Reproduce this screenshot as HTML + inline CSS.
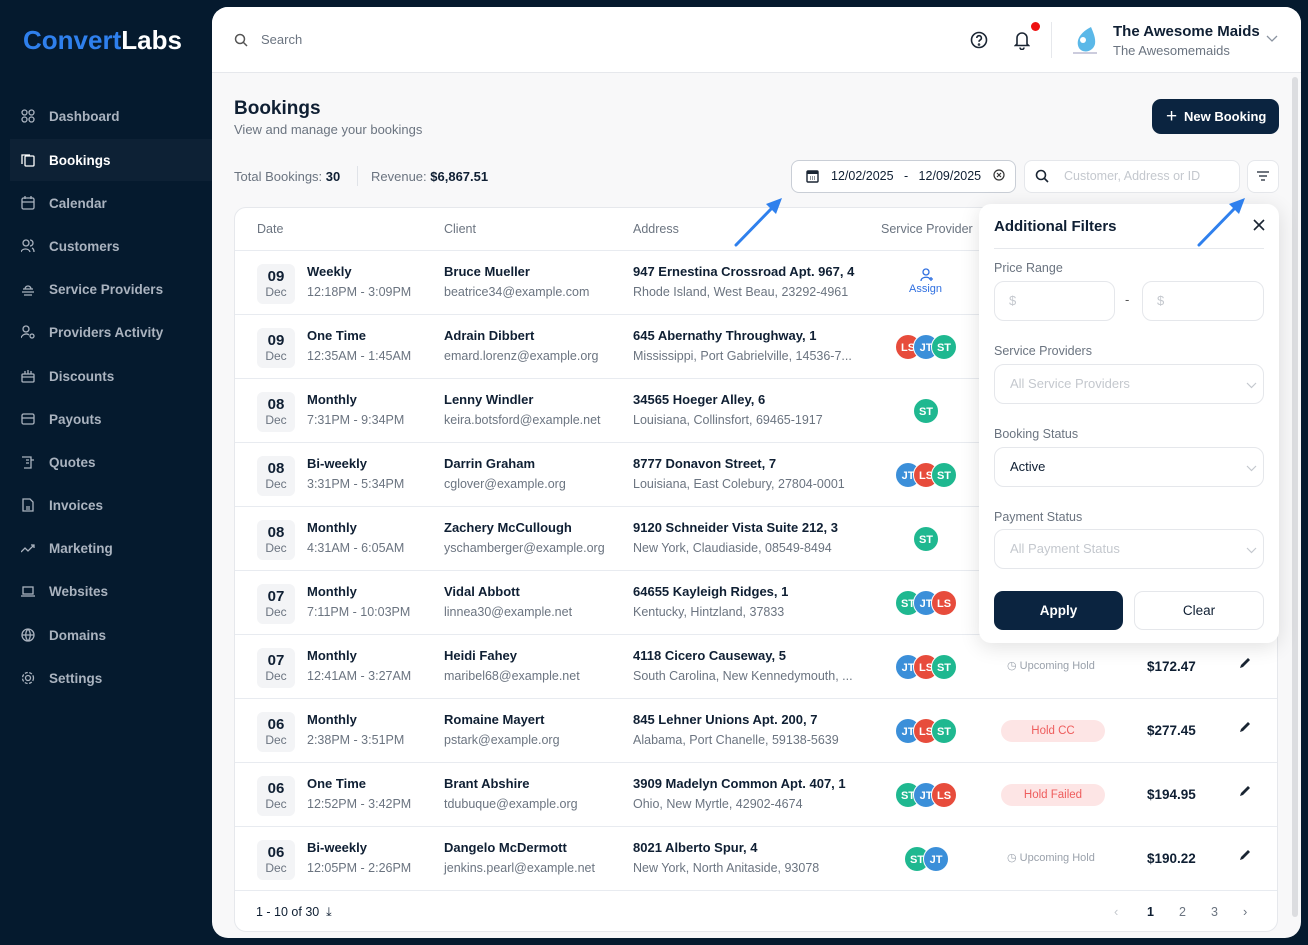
<!DOCTYPE html>
<html><head><meta charset="utf-8"><style>
*{box-sizing:border-box;margin:0;padding:0}
body{width:1308px;height:945px;background:#051a2e;font-family:"Liberation Sans",sans-serif;position:relative;overflow:hidden;color:#0f1f33}
.a{position:absolute}
.logo{left:23px;top:25px;font-size:26px;font-weight:bold;color:#fff}
.logo span{color:#2f80ed}
.nav{left:0;width:212px}
.ni{position:absolute;left:0;width:212px;height:42px;display:flex;align-items:center;padding-left:49px;color:#aab3bf;font-size:13.5px;font-weight:bold}
.ni.on{background:#0d2135;color:#fff;left:10px;width:202px;padding-left:39px}
.ni svg{position:absolute;left:21px;top:14px}
.ni.on svg{left:11px}
.main{left:212px;top:7px;width:1089px;height:931px;background:#f8f8f9;border-radius:16px;overflow:hidden}
.hdr{position:absolute;left:0;top:0;width:100%;height:66px;background:#fff;border-bottom:1px solid #e6e8ec}
.card{left:22px;top:200px;width:1044px;height:725px;background:#fff;border:1px solid #e6e8ec;border-radius:12px;overflow:hidden}
.row{position:absolute;left:0;width:100%;height:64px;border-top:1px solid #e8ebf0}
.db{position:absolute;left:22px;top:13px;width:38px;height:40px;background:#f3f4f6;border-radius:6px;text-align:center}
.db b{display:block;font-size:15px;margin-top:4px}
.db i{display:block;font-style:normal;font-size:12px;color:#6b7480}
.t1{position:absolute;font-size:13px;font-weight:bold;color:#0f1f33;top:13px;white-space:nowrap}
.t2{position:absolute;font-size:12.5px;color:#6b7480;top:34px;white-space:nowrap}
.av{position:absolute;width:26px;height:26px;border-radius:50%;color:#fff;font-size:11px;font-weight:bold;text-align:center;line-height:26px;top:19px;border:1px solid #fff}
.r{background:#e74c3c}.b{background:#3b8fd9}.g{background:#1fb890}
.pill{position:absolute;left:766px;top:21px;width:104px;height:22px;border-radius:11px;background:#fde5e5;color:#ee5d5d;font-size:11.5px;text-align:center;line-height:22px}
.up{position:absolute;left:772px;top:24px;font-size:11px;color:#9aa1ab}
.price{position:absolute;left:912px;top:24px;font-size:13.5px;font-weight:bold}
.pen{position:absolute;left:1004px;top:22px}
.flt{left:979px;top:204px;width:300px;height:439px;background:#fff;border-radius:12px;box-shadow:0 4px 20px rgba(0,0,0,.12)}
.lbl{position:absolute;left:15px;font-size:12.5px;color:#6b7480}
.inp{position:absolute;border:1px solid #e5e7eb;border-radius:10px;height:40px;font-size:13px;color:#c4c8ce;padding:11px 14px}
</style></head><body>
<div class="a logo"><span>Convert</span>Labs</div>

<div class="a nav" style="top:95px">
<div class="ni" style="top:0"><svg width="14" height="14" fill="none" stroke="#aab3bf" stroke-width="1.3"><rect x="1" y="1" width="5" height="5" rx="2.5"/><rect x="8" y="1" width="5" height="5" rx="2.5"/><rect x="1" y="8" width="5" height="5" rx="2.5"/><rect x="8" y="8" width="5" height="5" rx="2.5"/></svg>Dashboard</div>
<div class="ni on" style="top:44px"><svg width="14" height="14" fill="none" stroke="#fff" stroke-width="1.3"><rect x="4" y="3" width="9" height="10" rx="1"/><path d="M1 11V2h8"/></svg>Bookings</div>
<div class="ni" style="top:87px"><svg width="14" height="14" fill="none" stroke="#aab3bf" stroke-width="1.3"><rect x="1" y="2" width="12" height="11" rx="1.5"/><path d="M1 6h12M4 0v3M10 0v3"/></svg>Calendar</div>
<div class="ni" style="top:130px"><svg width="14" height="14" fill="none" stroke="#aab3bf" stroke-width="1.3"><circle cx="5" cy="4" r="3"/><path d="M0 13c1-4 8-4 9 0M9 1a3 3 0 010 6M11 9c2 1 2 3 2 4"/></svg>Customers</div>
<div class="ni" style="top:173px"><svg width="14" height="14" fill="none" stroke="#aab3bf" stroke-width="1.3"><path d="M2 7h10M4 7a3 3 0 016 0M1 10h12M3 13h8"/></svg>Service Providers</div>
<div class="ni" style="top:216px"><svg width="14" height="14" fill="none" stroke="#aab3bf" stroke-width="1.3"><circle cx="5" cy="4" r="3"/><path d="M0 13c1-4 6-5 8-3"/><circle cx="11" cy="11" r="2"/></svg>Providers Activity</div>
<div class="ni" style="top:260px"><svg width="14" height="14" fill="none" stroke="#aab3bf" stroke-width="1.3"><rect x="1" y="5" width="12" height="8" rx="1"/><path d="M1 8h12M4 5V2M7 5V1M10 5V2"/></svg>Discounts</div>
<div class="ni" style="top:303px"><svg width="14" height="14" fill="none" stroke="#aab3bf" stroke-width="1.3"><rect x="1" y="2" width="12" height="10" rx="1.5"/><path d="M1 6h12"/></svg>Payouts</div>
<div class="ni" style="top:346px"><svg width="14" height="14" fill="none" stroke="#aab3bf" stroke-width="1.3"><path d="M1 2h9v11H3M10 5h3M5 5h3M5 8h3"/></svg>Quotes</div>
<div class="ni" style="top:389px"><svg width="14" height="14" fill="none" stroke="#aab3bf" stroke-width="1.3"><path d="M2 1h7l3 3v9H2zM5 9h4M5 11h4"/></svg>Invoices</div>
<div class="ni" style="top:432px"><svg width="14" height="14" fill="none" stroke="#aab3bf" stroke-width="1.3"><path d="M0 11l4-4 3 3 6-6M10 4h3v3"/></svg>Marketing</div>
<div class="ni" style="top:475px"><svg width="14" height="14" fill="none" stroke="#aab3bf" stroke-width="1.3"><rect x="2" y="3" width="10" height="7"/><path d="M0 12h14"/></svg>Websites</div>
<div class="ni" style="top:519px"><svg width="14" height="14" fill="none" stroke="#aab3bf" stroke-width="1.3"><circle cx="7" cy="7" r="6"/><path d="M1 7h12M7 1c-3 3-3 9 0 12M7 1c3 3 3 9 0 12"/></svg>Domains</div>
<div class="ni" style="top:562px"><svg width="14" height="14" fill="none" stroke="#aab3bf" stroke-width="1.3"><circle cx="7" cy="7" r="2.5"/><circle cx="7" cy="7" r="5.5" stroke-dasharray="3 1.5"/></svg>Settings</div>
</div>

<div class="a main">
 <div class="hdr">
  <svg class="a" style="left:22px;top:26px" width="14" height="14" fill="none" stroke="#555" stroke-width="1.5"><circle cx="6" cy="6" r="4.5"/><path d="M9.5 9.5L13 13"/></svg>
  <div class="a" style="left:49px;top:25px;font-size:13px;color:#6b7480">Search</div>
  <svg class="a" style="left:758px;top:24px" width="18" height="18" fill="none" stroke="#1a2533" stroke-width="1.6"><circle cx="9" cy="9" r="7.5"/><path d="M6.8 7a2.3 2.3 0 114 1.5c-.8.6-1.8 1-1.8 2.2"/><circle cx="9" cy="13.5" r=".5"/></svg>
  <svg class="a" style="left:802px;top:23px" width="16" height="20" fill="none" stroke="#1a2533" stroke-width="1.6"><path d="M3 14V8a5 5 0 0110 0v6l1.5 1.5H1.5zM6 17.5a2 2 0 004 0"/></svg>
  <div class="a" style="left:819px;top:15px;width:9px;height:9px;border-radius:50%;background:#e11"></div>
  <div class="a" style="left:839px;top:15px;width:1px;height:36px;background:#e6e8ec"></div>
  <svg class="a" style="left:859px;top:17px" width="28" height="32"><path d="M20 3C10 8 4 16 8 24c4 6 14 4 16-4 1-6-2-12-4-17z" fill="#5bb8e8"/><circle cx="12" cy="16" r="3" fill="#fff"/><rect x="2" y="28" width="24" height="2" fill="#ccd"/></svg>
  <div class="a" style="left:901px;top:16px;font-size:15px;font-weight:bold;color:#0f1f33">The Awesome Maids</div>
  <div class="a" style="left:901px;top:36px;font-size:13px;color:#6b7480">The Awesomemaids</div>
  <svg class="a" style="left:1054px;top:28px" width="12" height="8" fill="none" stroke="#8a93a0" stroke-width="1.3"><path d="M1 1l5 5 5-5"/></svg>
 </div>
 <div class="a" style="left:22px;top:91px;font-size:19px;font-weight:bold">Bookings</div>
 <div class="a" style="left:22px;top:115px;font-size:13px;color:#6b7480">View and manage your bookings</div>
 <div class="a" style="left:940px;top:92px;width:127px;height:35px;background:#0b2440;border-radius:9px;color:#fff;font-size:13px;font-weight:bold;line-height:35px;padding-left:32px">New Booking</div>
 <div class="a" style="left:954px;top:100px;color:#fff;font-size:19px;line-height:19px">+</div>
 <div class="a" style="left:22px;top:162px;font-size:13px;color:#6b7480">Total Bookings: <b style="color:#0f1f33">30</b></div>
 <div class="a" style="left:145px;top:159px;width:1px;height:20px;background:#e0e3e8"></div>
 <div class="a" style="left:159px;top:162px;font-size:13px;color:#6b7480">Revenue: <b style="color:#0f1f33">$6,867.51</b></div>
 <div class="a" style="left:579px;top:153px;width:225px;height:33px;border:1px solid #c9ced6;border-radius:8px;background:#fff;font-size:12.5px;line-height:31px;padding-left:39px;color:#0f1f33">12/02/2025 &nbsp;&nbsp;- &nbsp;&nbsp;12/09/2025</div>
 <svg class="a" style="left:594px;top:162px" width="13" height="14"><rect x="1" y="2" width="11" height="11" rx="1" fill="none" stroke="#1a2533" stroke-width="1.4"/><rect x="1" y="2" width="11" height="3" fill="#1a2533"/><path d="M4 8h1M6 8h1M8 8h1M4 10h1M6 10h1M8 10h1" stroke="#1a2533"/></svg>
 <svg class="a" style="left:781px;top:162px" width="12" height="12" fill="none" stroke="#333" stroke-width="1.2"><circle cx="6" cy="6" r="5"/><path d="M4 4l4 4M8 4l-4 4"/></svg>
 <div class="a" style="left:812px;top:153px;width:216px;height:33px;border:1px solid #e5e7eb;border-radius:8px;background:#fff;font-size:12.5px;line-height:31px;padding-left:39px;color:#c4c8ce">Customer, Address or ID</div>
 <svg class="a" style="left:823px;top:162px" width="14" height="14" fill="none" stroke="#1a2533" stroke-width="1.6"><circle cx="6" cy="6" r="4.5"/><path d="M9.5 9.5L13 13"/></svg>
 <div class="a" style="left:1035px;top:153px;width:32px;height:33px;border:1px solid #e5e7eb;border-radius:8px;background:#fff"></div>
 <svg class="a" style="left:1045px;top:164px" width="12" height="10" stroke="#1a2533" stroke-width="1.3"><path d="M0 1h12M2 5h8M4 9h4"/></svg>

 <div class="a card">
  <div class="a" style="left:22px;top:14px;font-size:12.5px;color:#6b7480">Date</div>
  <div class="a" style="left:209px;top:14px;font-size:12.5px;color:#6b7480">Client</div>
  <div class="a" style="left:398px;top:14px;font-size:12.5px;color:#6b7480">Address</div>
  <div class="a" style="left:646px;top:14px;font-size:12.5px;color:#6b7480">Service Provider</div>

  <div class="row" style="top:42px"><div class="db"><b>09</b><i>Dec</i></div><div class="t1" style="left:72px">Weekly</div><div class="t2" style="left:72px">12:18PM - 3:09PM</div><div class="t1" style="left:209px">Bruce Mueller</div><div class="t2" style="left:209px">beatrice34@example.com</div><div class="t1" style="left:398px">947 Ernestina Crossroad Apt. 967, 4</div><div class="t2" style="left:398px">Rhode Island, West Beau, 23292-4961</div>
   <svg class="a" style="left:685px;top:17px" width="14" height="14" fill="none" stroke="#2f6fe0" stroke-width="1.3"><circle cx="6" cy="4" r="3"/><path d="M1 13c0-4 7-5 9-2M11 9v4M9 11h4"/></svg><div class="a" style="left:674px;top:32px;font-size:11px;color:#2f6fe0">Assign</div></div>
  <div class="row" style="top:106px"><div class="db"><b>09</b><i>Dec</i></div><div class="t1" style="left:72px">One Time</div><div class="t2" style="left:72px">12:35AM - 1:45AM</div><div class="t1" style="left:209px">Adrain Dibbert</div><div class="t2" style="left:209px">emard.lorenz@example.org</div><div class="t1" style="left:398px">645 Abernathy Throughway, 1</div><div class="t2" style="left:398px">Mississippi, Port Gabrielville, 14536-7...</div>
   <div class="av r" style="left:660px">LS</div><div class="av b" style="left:678px">JT</div><div class="av g" style="left:696px">ST</div></div>
  <div class="row" style="top:170px"><div class="db"><b>08</b><i>Dec</i></div><div class="t1" style="left:72px">Monthly</div><div class="t2" style="left:72px">7:31PM - 9:34PM</div><div class="t1" style="left:209px">Lenny Windler</div><div class="t2" style="left:209px">keira.botsford@example.net</div><div class="t1" style="left:398px">34565 Hoeger Alley, 6</div><div class="t2" style="left:398px">Louisiana, Collinsfort, 69465-1917</div>
   <div class="av g" style="left:678px">ST</div></div>
  <div class="row" style="top:234px"><div class="db"><b>08</b><i>Dec</i></div><div class="t1" style="left:72px">Bi-weekly</div><div class="t2" style="left:72px">3:31PM - 5:34PM</div><div class="t1" style="left:209px">Darrin Graham</div><div class="t2" style="left:209px">cglover@example.org</div><div class="t1" style="left:398px">8777 Donavon Street, 7</div><div class="t2" style="left:398px">Louisiana, East Colebury, 27804-0001</div>
   <div class="av b" style="left:660px">JT</div><div class="av r" style="left:678px">LS</div><div class="av g" style="left:696px">ST</div></div>
  <div class="row" style="top:298px"><div class="db"><b>08</b><i>Dec</i></div><div class="t1" style="left:72px">Monthly</div><div class="t2" style="left:72px">4:31AM - 6:05AM</div><div class="t1" style="left:209px">Zachery McCullough</div><div class="t2" style="left:209px">yschamberger@example.org</div><div class="t1" style="left:398px">9120 Schneider Vista Suite 212, 3</div><div class="t2" style="left:398px">New York, Claudiaside, 08549-8494</div>
   <div class="av g" style="left:678px">ST</div></div>
  <div class="row" style="top:362px"><div class="db"><b>07</b><i>Dec</i></div><div class="t1" style="left:72px">Monthly</div><div class="t2" style="left:72px">7:11PM - 10:03PM</div><div class="t1" style="left:209px">Vidal Abbott</div><div class="t2" style="left:209px">linnea30@example.net</div><div class="t1" style="left:398px">64655 Kayleigh Ridges, 1</div><div class="t2" style="left:398px">Kentucky, Hintzland, 37833</div>
   <div class="av g" style="left:660px">ST</div><div class="av b" style="left:678px">JT</div><div class="av r" style="left:696px">LS</div></div>
  <div class="row" style="top:426px"><div class="db"><b>07</b><i>Dec</i></div><div class="t1" style="left:72px">Monthly</div><div class="t2" style="left:72px">12:41AM - 3:27AM</div><div class="t1" style="left:209px">Heidi Fahey</div><div class="t2" style="left:209px">maribel68@example.net</div><div class="t1" style="left:398px">4118 Cicero Causeway, 5</div><div class="t2" style="left:398px">South Carolina, New Kennedymouth, ...</div>
   <div class="av b" style="left:660px">JT</div><div class="av r" style="left:678px">LS</div><div class="av g" style="left:696px">ST</div>
   <div class="up">&#9719; Upcoming Hold</div><div class="price">$172.47</div><svg class="pen" width="12" height="12"><path d="M1 11l1-3 7-7 2 2-7 7z" fill="#1a2533"/></svg></div>
  <div class="row" style="top:490px"><div class="db"><b>06</b><i>Dec</i></div><div class="t1" style="left:72px">Monthly</div><div class="t2" style="left:72px">2:38PM - 3:51PM</div><div class="t1" style="left:209px">Romaine Mayert</div><div class="t2" style="left:209px">pstark@example.org</div><div class="t1" style="left:398px">845 Lehner Unions Apt. 200, 7</div><div class="t2" style="left:398px">Alabama, Port Chanelle, 59138-5639</div>
   <div class="av b" style="left:660px">JT</div><div class="av r" style="left:678px">LS</div><div class="av g" style="left:696px">ST</div>
   <div class="pill">Hold CC</div><div class="price">$277.45</div><svg class="pen" width="12" height="12"><path d="M1 11l1-3 7-7 2 2-7 7z" fill="#1a2533"/></svg></div>
  <div class="row" style="top:554px"><div class="db"><b>06</b><i>Dec</i></div><div class="t1" style="left:72px">One Time</div><div class="t2" style="left:72px">12:52PM - 3:42PM</div><div class="t1" style="left:209px">Brant Abshire</div><div class="t2" style="left:209px">tdubuque@example.org</div><div class="t1" style="left:398px">3909 Madelyn Common Apt. 407, 1</div><div class="t2" style="left:398px">Ohio, New Myrtle, 42902-4674</div>
   <div class="av g" style="left:660px">ST</div><div class="av b" style="left:678px">JT</div><div class="av r" style="left:696px">LS</div>
   <div class="pill">Hold Failed</div><div class="price">$194.95</div><svg class="pen" width="12" height="12"><path d="M1 11l1-3 7-7 2 2-7 7z" fill="#1a2533"/></svg></div>
  <div class="row" style="top:618px"><div class="db"><b>06</b><i>Dec</i></div><div class="t1" style="left:72px">Bi-weekly</div><div class="t2" style="left:72px">12:05PM - 2:26PM</div><div class="t1" style="left:209px">Dangelo McDermott</div><div class="t2" style="left:209px">jenkins.pearl@example.net</div><div class="t1" style="left:398px">8021 Alberto Spur, 4</div><div class="t2" style="left:398px">New York, North Anitaside, 93078</div>
   <div class="av g" style="left:669px">ST</div><div class="av b" style="left:688px">JT</div>
   <div class="up">&#9719; Upcoming Hold</div><div class="price">$190.22</div><svg class="pen" width="12" height="12"><path d="M1 11l1-3 7-7 2 2-7 7z" fill="#1a2533"/></svg></div>
  <div class="row" style="top:682px">
   <div class="a" style="left:21px;top:14px;font-size:12.5px;color:#0f1f33">1 - 10 of 30 &nbsp;&#10515;</div>
   <div class="a" style="left:879px;top:13px;font-size:13px;color:#c4c8ce">&lsaquo;</div>
   <div class="a" style="left:912px;top:14px;font-size:12.5px;font-weight:bold">1</div>
   <div class="a" style="left:944px;top:14px;font-size:12.5px;color:#6b7480">2</div>
   <div class="a" style="left:976px;top:14px;font-size:12.5px;color:#6b7480">3</div>
   <div class="a" style="left:1008px;top:13px;font-size:13px;color:#6b7480">&rsaquo;</div>
  </div>
 </div>
 <div class="a" style="left:1080px;top:70px;width:6px;height:840px;background:#dcdde0;border-radius:3px"></div>
</div>

<div class="a flt">
 <div class="a" style="left:15px;top:14px;font-size:15px;font-weight:bold;color:#0f1f33">Additional Filters</div>
 <svg class="a" style="left:274px;top:15px" width="12" height="12" stroke="#1a2533" stroke-width="1.6"><path d="M1 1l10 10M11 1L1 11"/></svg>
 <div class="a" style="left:15px;top:44px;width:270px;height:1px;background:#e6e8ec"></div>
 <div class="lbl" style="top:57px">Price Range</div>
 <div class="inp" style="left:15px;top:77px;width:121px">$</div>
 <div class="a" style="left:146px;top:88px;font-size:13px;color:#555">-</div>
 <div class="inp" style="left:163px;top:77px;width:122px">$</div>
 <div class="lbl" style="top:140px">Service Providers</div>
 <div class="inp" style="left:15px;top:160px;width:270px;padding-left:15px">All Service Providers</div>
 <div class="lbl" style="top:223px">Booking Status</div>
 <div class="inp" style="left:15px;top:243px;width:270px;padding-left:15px;color:#0f1f33">Active</div>
 <div class="lbl" style="top:306px">Payment Status</div>
 <div class="inp" style="left:15px;top:325px;width:270px;padding-left:15px">All Payment Status</div>
 <svg class="a" style="left:267px;top:178px" width="11" height="7" fill="none" stroke="#c4c8ce" stroke-width="1.2"><path d="M1 1l4.5 4.5L10 1"/></svg>
 <svg class="a" style="left:267px;top:261px" width="11" height="7" fill="none" stroke="#c4c8ce" stroke-width="1.2"><path d="M1 1l4.5 4.5L10 1"/></svg>
 <svg class="a" style="left:267px;top:343px" width="11" height="7" fill="none" stroke="#c4c8ce" stroke-width="1.2"><path d="M1 1l4.5 4.5L10 1"/></svg>
 <div class="a" style="left:15px;top:387px;width:129px;height:39px;background:#0b2440;border-radius:9px;color:#fff;font-size:13.5px;font-weight:bold;text-align:center;line-height:39px">Apply</div>
 <div class="a" style="left:155px;top:387px;width:130px;height:39px;border:1px solid #e5e7eb;border-radius:9px;color:#0f1f33;font-size:13.5px;text-align:center;line-height:37px">Clear</div>
</div>

<svg class="a" style="left:0;top:0" width="1308" height="945" fill="none">
 <g stroke="#2f80ed" stroke-width="3" stroke-linecap="round"><path d="M736 245L772 208"/><path d="M1199 245L1235 208"/></g>
 <path d="M782 198l-16 6 10 10z" fill="#2f80ed"/>
 <path d="M1245 198l-16 6 10 10z" fill="#2f80ed"/>
</svg>
</body></html>
